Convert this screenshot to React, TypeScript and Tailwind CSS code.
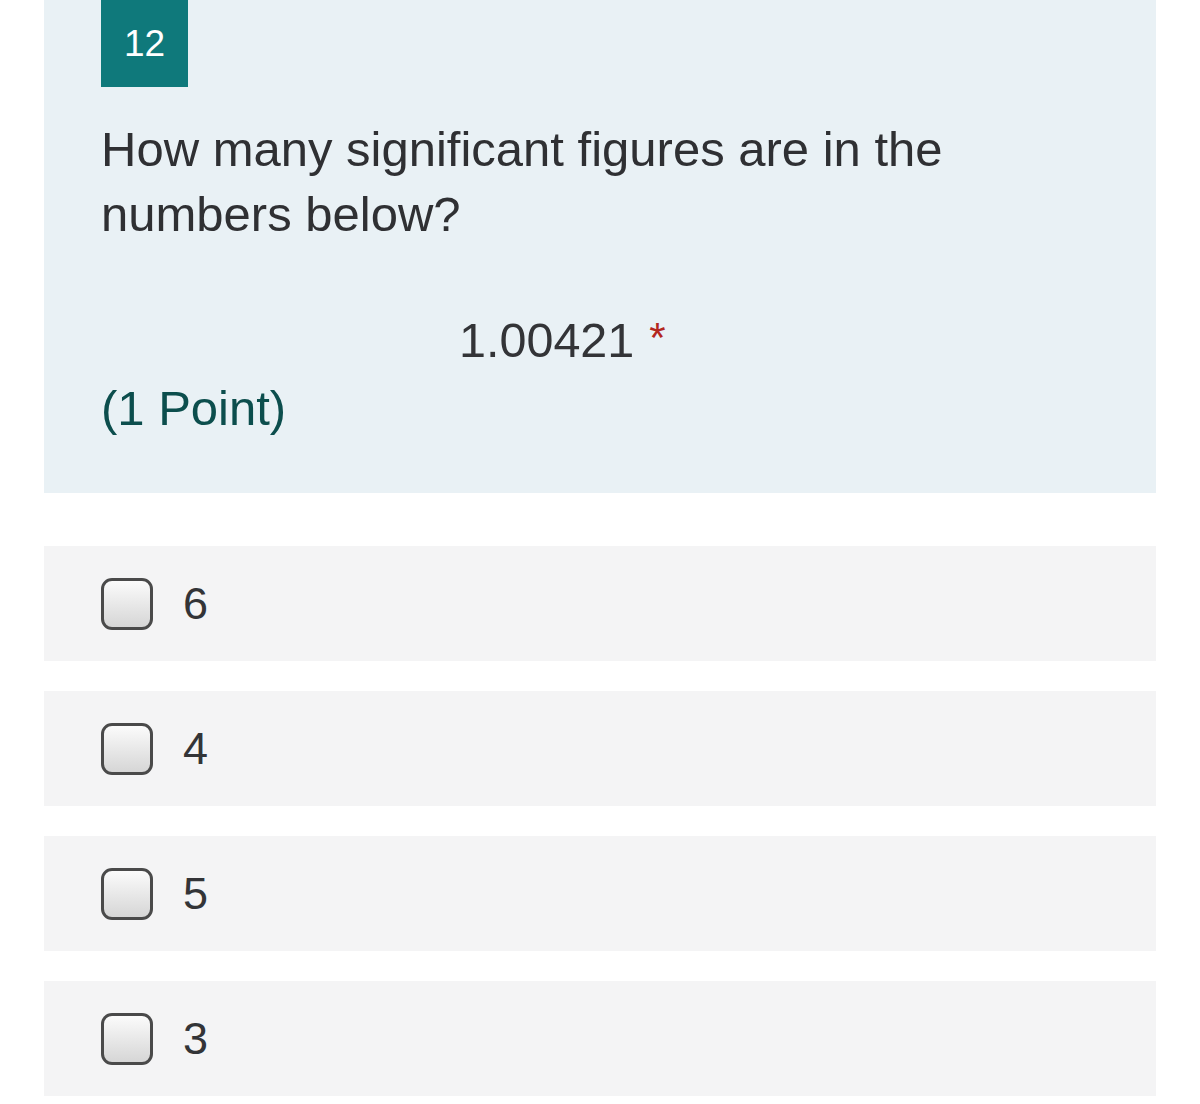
import React from "react";

const options = ["6", "4", "5", "3"];

function Checkbox() {
  return (
    <span className="block h-[52px] w-[52px] shrink-0 rounded-[11px] border-[3px] border-[#4a4a4a] bg-gradient-to-b from-[#fbfbfb] to-[#d6d6d6]" />
  );
}

export default function App() {
  return (
    <div className="min-h-[1104px] bg-white px-[44px] font-['Liberation_Sans',Arial,sans-serif]">
      <div className="h-[493px] bg-[#e9f1f5] px-[57px]">
        <div className="flex h-[87px] w-[87px] items-center justify-center bg-[#0f797b] text-[37px] text-white">
          12
        </div>
        <h1 className="mt-[30px] text-[49px] leading-[65px] text-[#2f3033]">
          How many significant figures are in the
          <br />
          numbers below?
        </h1>
        <div className="mt-[65px] flex items-start pl-[358px] text-[48.5px] leading-[56px] text-[#333437]">
          <span>1.00421</span>
          <span className="ml-[15px] -mt-[2px] text-[42px] text-[#b3271e]">*</span>
        </div>
        <div className="mt-[12px] text-[49px] leading-[56px] text-[#0c4e4d]">(1 Point)</div>
      </div>
      <div className="mt-[53px] flex flex-col gap-[30px]">
        {options.map(o => (
          <div key={o} className="flex h-[115px] items-center gap-[30px] bg-[#f4f4f5] px-[57px]">
            <Checkbox />
            <span className="text-[45px] text-[#333437]">{o}</span>
          </div>
        ))}
      </div>
    </div>
  );
}
